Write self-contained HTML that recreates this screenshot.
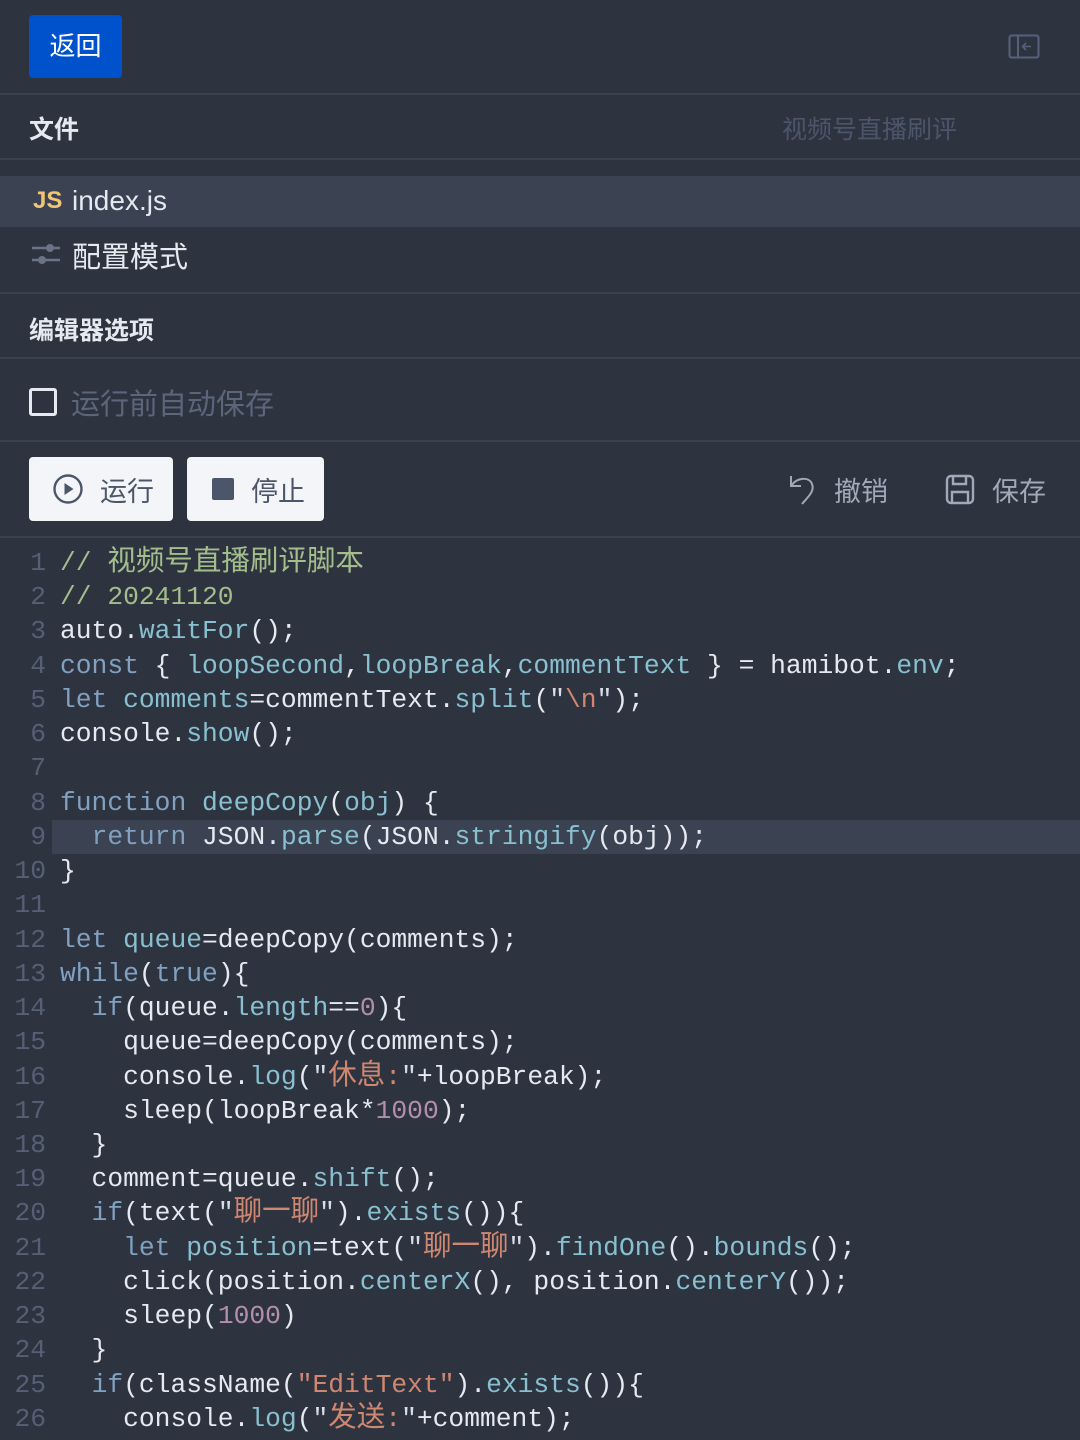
<!DOCTYPE html>
<html><head><meta charset="utf-8"><style>
*{margin:0;padding:0;box-sizing:border-box}
body{width:1080px;height:1440px;overflow:hidden;background:#2e3340;font-family:"Liberation Sans","Noto Sans CJK SC",sans-serif;color:#e5e9f0;position:relative}
.a{position:absolute}
.hr{position:absolute;left:0;width:1080px;height:2px;background:#3a404d}
.btn{position:absolute;background:#f3f5f8;border-radius:4px;color:#4c566a;font-size:27px}
.code{position:absolute;left:0;top:546px;width:1080px;font-family:"Liberation Mono","Noto Sans CJK SC",monospace;font-size:26.3px;line-height:34.24px;white-space:pre}
.ln{display:inline-block;width:46px;text-align:right;color:#566074;margin-right:14px}
.k{color:#81a1c1}.f{color:#88c0d0}.c{color:#a3be8c}.s{color:#d08770}.n{color:#b48ead}.q{color:#d8dee9}
.z{font-size:28.5px;line-height:20px}
.hl{background:#3b4252;margin-left:52px;padding-left:8px}
</style></head><body>
<div class="a" style="left:29px;top:15px;width:93px;height:63px;background:#0052cc;border-radius:4px;color:#fff;font-size:26px;line-height:63px;text-align:center">返回</div>
<svg class="a" style="left:1008px;top:34px" width="32" height="26" viewBox="0 0 32 26"><rect x="1.5" y="1.5" width="29" height="22" rx="2" fill="none" stroke="#55607a" stroke-width="2"/><line x1="10" y1="2" x2="10" y2="24" stroke="#55607a" stroke-width="2"/><path d="M23 12.5h-8M18 9l-3.5 3.5L18 16" fill="none" stroke="#55607a" stroke-width="1.6"/></svg>
<div class="hr" style="top:93px"></div>
<div class="a" style="left:29px;top:110px;font-size:25px;font-weight:bold;color:#e5e9f0">文件</div>
<div class="a" style="left:782px;top:110px;font-size:25px;color:#4c566a">视频号直播刷评</div>
<div class="hr" style="top:158px"></div>
<div class="a" style="left:0;top:176px;width:1080px;height:51px;background:#3b4252"></div>
<div class="a" style="left:33px;top:187px;font-size:24px;font-weight:bold;color:#f0c674">JS</div>
<div class="a" style="left:72px;top:185px;font-size:28px;color:#e5e9f0">index.js</div>
<svg class="a" style="left:31px;top:240px" width="30" height="30" viewBox="0 0 30 30"><line x1="1" y1="8" x2="29" y2="8" stroke="#6b7487" stroke-width="2.5"/><circle cx="19" cy="8" r="4" fill="#6b7487"/><line x1="1" y1="20" x2="29" y2="20" stroke="#6b7487" stroke-width="2.5"/><circle cx="11" cy="20" r="4" fill="#6b7487"/></svg>
<div class="a" style="left:72px;top:234px;font-size:29px;color:#e5e9f0">配置模式</div>
<div class="hr" style="top:292px"></div>
<div class="a" style="left:29px;top:311px;font-size:25px;font-weight:bold;color:#e5e9f0">编辑器选项</div>
<div class="hr" style="top:357px"></div>
<div class="a" style="left:29px;top:388px;width:28px;height:28px;border:3px solid #e5e9f0;border-radius:3px"></div>
<div class="a" style="left:71px;top:381px;font-size:29px;color:#5b667a">运行前自动保存</div>
<div class="hr" style="top:440px"></div>
<div class="btn" style="left:29px;top:457px;width:144px;height:64px"><svg class="a" style="left:23px;top:16px" width="32" height="32" viewBox="0 0 32 32"><circle cx="16" cy="16" r="13.5" fill="none" stroke="#4c566a" stroke-width="2.4"/><path d="M12.5 10v12l9-6z" fill="#4c566a"/></svg><span class="a" style="left:71px;top:13px">运行</span></div>
<div class="btn" style="left:187px;top:457px;width:137px;height:64px"><div class="a" style="left:25px;top:21px;width:22px;height:22px;background:#4c566a;border-radius:2px"></div><span class="a" style="left:64px;top:13px">停止</span></div>
<svg class="a" style="left:787px;top:472px" width="32" height="36" viewBox="0 0 32 36"><path d="M4 4v10h10" fill="none" stroke="#a0a9b8" stroke-width="2"/><path d="M5 13C9 6 22 4 25 12c3 7-4 13-10 20" fill="none" stroke="#a0a9b8" stroke-width="2"/></svg>
<div class="a" style="left:834px;top:470px;font-size:27px;color:#a0a9b8">撤销</div>
<svg class="a" style="left:945px;top:474px" width="30" height="32" viewBox="0 0 30 32"><rect x="2" y="2" width="26" height="27" rx="4" fill="none" stroke="#a0a9b8" stroke-width="2.4"/><path d="M8 2v8h13V2M7 29V18h16v11" fill="none" stroke="#a0a9b8" stroke-width="2.4"/></svg>
<div class="a" style="left:992px;top:470px;font-size:27px;color:#a0a9b8">保存</div>
<div class="hr" style="top:536px"></div>
<div class="code"><div><span class="ln">1</span><span class="c">// <span class="z">视频号直播刷评脚本</span></span></div><div><span class="ln">2</span><span class="c">// 20241120</span></div><div><span class="ln">3</span>auto.<span class="f">waitFor</span>();</div><div><span class="ln">4</span><span class="k">const</span> { <span class="f">loopSecond</span>,<span class="f">loopBreak</span>,<span class="f">commentText</span> } = hamibot.<span class="f">env</span>;</div><div><span class="ln">5</span><span class="k">let</span> <span class="f">comments</span>=commentText.<span class="f">split</span>(<span class="q">"</span><span class="s">\n</span><span class="q">"</span>);</div><div><span class="ln">6</span>console.<span class="f">show</span>();</div><div><span class="ln">7</span></div><div><span class="ln">8</span><span class="k">function</span> <span class="f">deepCopy</span>(<span class="f">obj</span>) {</div><div style="position:relative"><span class="ln" style="position:absolute;left:0">9</span><div class="hl">  <span class="k">return</span> JSON.<span class="f">parse</span>(JSON.<span class="f">stringify</span>(obj));</div></div><div><span class="ln">10</span>}</div><div><span class="ln">11</span></div><div><span class="ln">12</span><span class="k">let</span> <span class="f">queue</span>=deepCopy(comments);</div><div><span class="ln">13</span><span class="k">while</span>(<span class="k">true</span>){</div><div><span class="ln">14</span>  <span class="k">if</span>(queue.<span class="f">length</span>==<span class="n">0</span>){</div><div><span class="ln">15</span>    queue=deepCopy(comments);</div><div><span class="ln">16</span>    console.<span class="f">log</span>(<span class="q">"</span><span class="s"><span class="z">休息</span>:</span><span class="q">"</span>+loopBreak);</div><div><span class="ln">17</span>    sleep(loopBreak*<span class="n">1000</span>);</div><div><span class="ln">18</span>  }</div><div><span class="ln">19</span>  comment=queue.<span class="f">shift</span>();</div><div><span class="ln">20</span>  <span class="k">if</span>(text(<span class="q">"</span><span class="s z">聊一聊</span><span class="q">"</span>).<span class="f">exists</span>()){</div><div><span class="ln">21</span>    <span class="k">let</span> <span class="f">position</span>=text(<span class="q">"</span><span class="s z">聊一聊</span><span class="q">"</span>).<span class="f">findOne</span>().<span class="f">bounds</span>();</div><div><span class="ln">22</span>    click(position.<span class="f">centerX</span>(), position.<span class="f">centerY</span>());</div><div><span class="ln">23</span>    sleep(<span class="n">1000</span>)</div><div><span class="ln">24</span>  }</div><div><span class="ln">25</span>  <span class="k">if</span>(className(<span class="s">"EditText"</span>).<span class="f">exists</span>()){</div><div><span class="ln">26</span>    console.<span class="f">log</span>(<span class="q">"</span><span class="s"><span class="z">发送</span>:</span><span class="q">"</span>+comment);</div></div>
</body></html>
